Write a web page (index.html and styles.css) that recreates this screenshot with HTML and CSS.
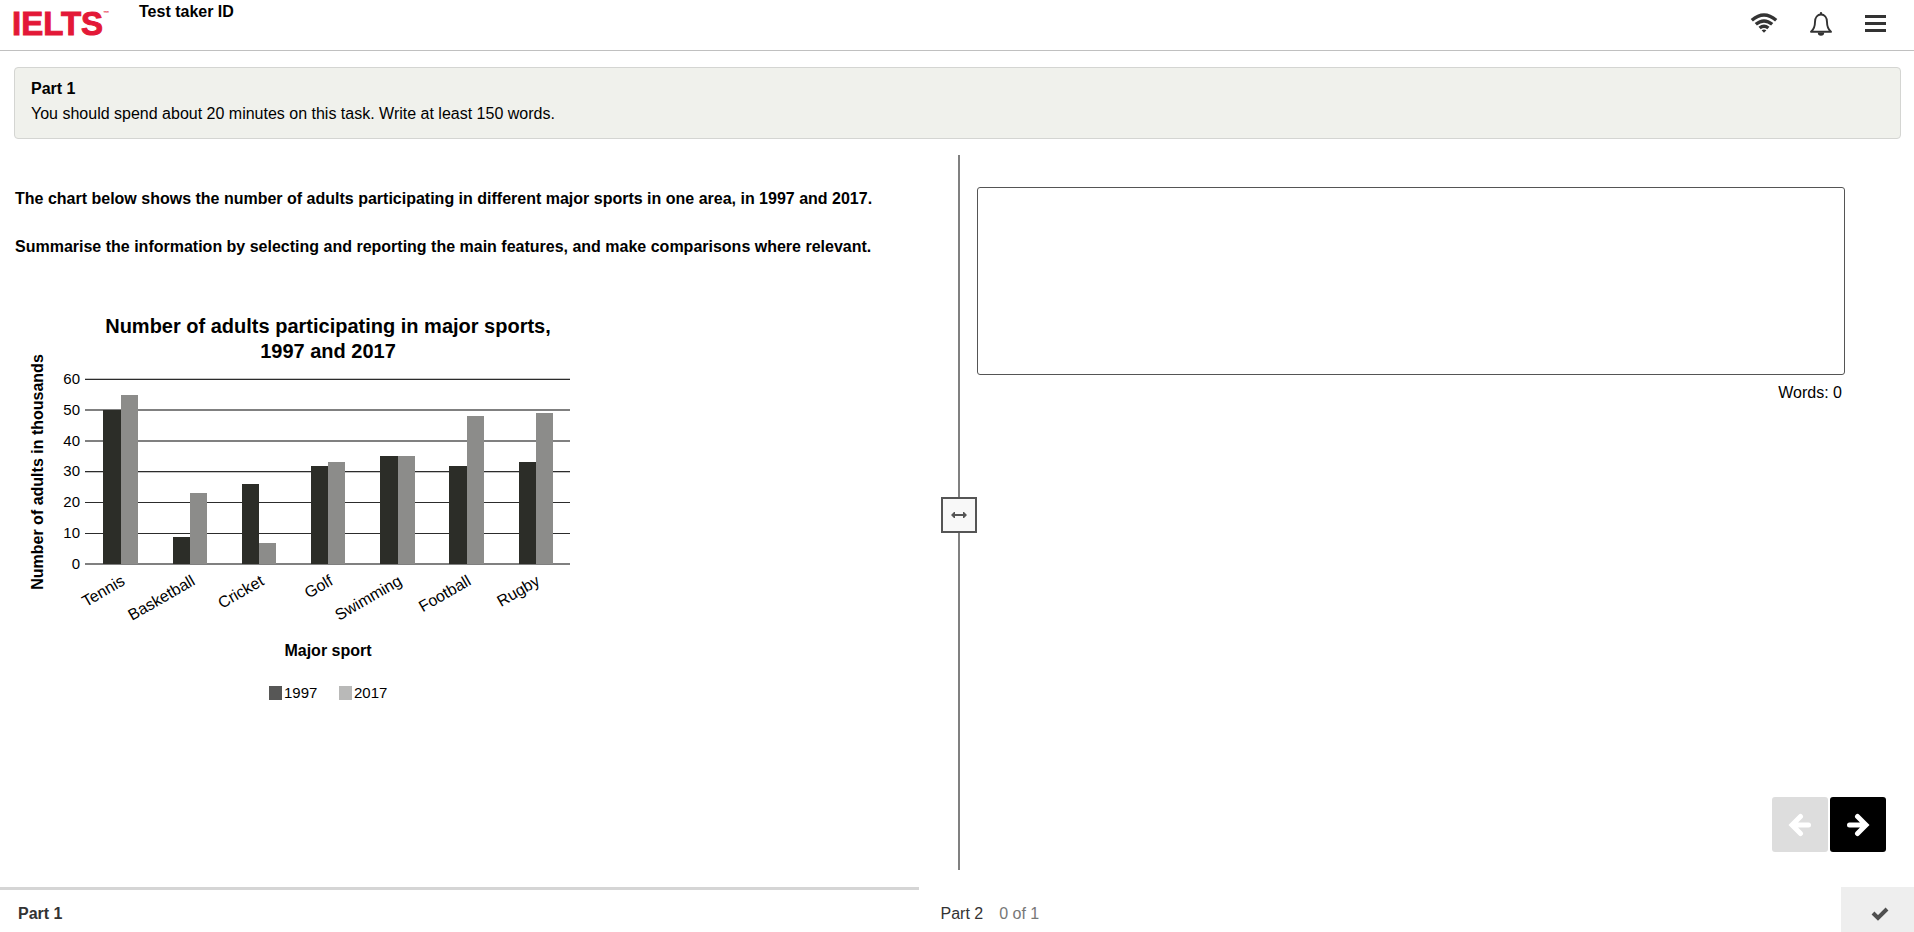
FILE: index.html
```html
<!DOCTYPE html>
<html lang="en">
<head>
<meta charset="utf-8">
<title>IELTS Writing - Part 1</title>
<link rel="stylesheet" href="styles.css">
</head>
<body>
<header class="topbar">
  <div class="logo">IELTS<span class="logo-tm">™</span></div>
  <div class="taker">Test taker ID</div>
  <div class="tools">
    <button class="tool" type="button" aria-label="Connection">
      <svg width="28" height="28" viewBox="0 0 28 28" fill="none" stroke="#333" stroke-width="3.400">
        <path d="M1.800 11.300Q14 0.900 26.200 11.300M5.800 15.300Q14 8.500 22.200 15.300M9.600 19Q14 15.300 18.400 19"/>
        <path d="M11.600 21.300Q14 19.700 16.400 21.300L14 23.800Z" fill="#333" stroke="none"/>
      </svg>
    </button>
    <button class="tool" type="button" aria-label="Notifications">
      <svg width="28" height="28" viewBox="-1 0 28 28">
        <path d="M4 22.800C7.500 19.800 8 16.500 8 13C8 8.500 10.500 5.500 14 5.500S20 8.500 20 13C20 16.500 20.500 19.800 24 22.800Z" fill="none" stroke="#333" stroke-width="1.900" stroke-linejoin="round"/>
        <path d="M12.800 5.500V4.200a1.200 1.200 0 0 1 2.400 0V5.500ZM10.800 23.500h6.400a3.200 3.200 0 0 1-6.400 0Z" fill="#333"/>
      </svg>
    </button>
    <button class="tool" type="button" aria-label="Menu">
      <svg width="28" height="28" viewBox="0 0 28 28" fill="#333">
        <path d="M3 6h21v3H3zM3 13h21v3H3zM3 20h21v3H3z"/>
      </svg>
    </button>
  </div>
</header>

<section class="banner">
  <h1 class="banner-title">Part 1</h1>
  <p class="banner-text">You should spend about 20 minutes on this task. Write at least 150 words.</p>
</section>

<main class="split">
  <section class="task">
    <p class="prompt">The chart below shows the number of adults participating in different major sports in one area, in 1997 and 2017.</p>
    <p class="prompt">Summarise the information by selecting and reporting the main features, and make comparisons where relevant.</p>
    <svg class="chart" width="560" height="410" viewBox="0 0 560 410" role="img" aria-label="Number of adults participating in major sports, 1997 and 2017">
      <g class="chart-title">
        <text x="313" y="33">Number of adults participating in major sports,</text>
        <text x="313" y="58">1997 and 2017</text>
      </g>
      <text class="axis-title" transform="translate(28 172) rotate(-90)">Number of adults in thousands</text>
      <g class="grid-dark">
        <rect x="70" y="79" width="485" height="1"/>
        <rect x="70" y="171" width="485" height="1"/>
        <rect x="70" y="202" width="485" height="1"/>
        <rect x="70" y="233" width="485" height="1"/>
      </g>
      <g class="grid-soft">
        <rect x="70" y="78" width="485" height="1"/>
        <rect x="70" y="172" width="485" height="1"/>
      </g>
      <g class="grid-mid">
        <rect x="70" y="109" width="485" height="2"/>
        <rect x="70" y="140" width="485" height="2"/>
        <rect x="70" y="263" width="485" height="2"/>
      </g>
      <g class="ticks">
        <text x="65" y="84">60</text>
        <text x="65" y="115">50</text>
        <text x="65" y="146">40</text>
        <text x="65" y="176">30</text>
        <text x="65" y="207">20</text>
        <text x="65" y="238">10</text>
        <text x="65" y="269">0</text>
      </g>
      <g class="bars-1997">
        <rect x="88" y="110" width="18" height="154"/>
        <rect x="158" y="237" width="17" height="27"/>
        <rect x="227" y="184" width="17" height="80"/>
        <rect x="296" y="166" width="17" height="98"/>
        <rect x="365" y="156" width="18" height="108"/>
        <rect x="434" y="166" width="18" height="98"/>
        <rect x="504" y="162" width="17" height="102"/>
      </g>
      <g class="bars-2017">
        <rect x="106" y="95" width="17" height="169"/>
        <rect x="175" y="193" width="17" height="71"/>
        <rect x="244" y="243" width="17" height="21"/>
        <rect x="313" y="162" width="17" height="102"/>
        <rect x="383" y="156" width="17" height="108"/>
        <rect x="452" y="116" width="17" height="148"/>
        <rect x="521" y="113" width="17" height="151"/>
      </g>
      <g class="categories">
        <text transform="translate(111 284) rotate(-30)">Tennis</text>
        <text transform="translate(181 284) rotate(-30)">Basketball</text>
        <text transform="translate(250 284) rotate(-30)">Cricket</text>
        <text transform="translate(319 284) rotate(-30)">Golf</text>
        <text transform="translate(388 284) rotate(-30)">Swimming</text>
        <text transform="translate(457 284) rotate(-30)">Football</text>
        <text transform="translate(526 284) rotate(-30)">Rugby</text>
      </g>
      <text class="axis-title" x="313" y="356">Major sport</text>
      <rect x="254" y="386" width="13" height="14" fill="#575756"/>
      <rect x="324" y="386" width="13" height="14" fill="#b9b9b8"/>
      <g class="legend">
        <text x="269" y="398">1997</text>
        <text x="339" y="398">2017</text>
      </g>
    </svg>
  </section>

  <div class="divider">
    <button class="handle" type="button" aria-label="Resize panels">
      <svg width="16" height="10" viewBox="0 0 16 10" fill="#555"><path d="M0 5L3 2H4V4H12V2H13L16 5L13 8H12V6H4V8H3Z"/></svg>
    </button>
  </div>

  <section class="answer">
    <textarea class="answer-box" aria-label="Your answer"></textarea>
    <div class="words">Words: 0</div>
    <div class="pager">
      <button class="page-btn page-prev" type="button" disabled aria-label="Previous">
        <svg width="24" height="24" viewBox="0 0 24 24" fill="none" stroke="#fff" stroke-width="5" stroke-linecap="round" stroke-linejoin="miter"><path d="M20.500 12H5M12.500 3.500L4 12L12.500 20.500"/></svg>
      </button>
      <button class="page-btn" type="button" aria-label="Next">
        <svg width="24" height="24" viewBox="0 0 24 24" fill="none" stroke="#fff" stroke-width="5" stroke-linecap="round" stroke-linejoin="miter"><path d="M3.500 12H19M11.500 3.500L20 12L11.500 20.500"/></svg>
      </button>
    </div>
  </section>
</main>

<footer class="footer">
  <button class="part part-current" type="button">Part 1</button>
  <button class="part" type="button">Part 2<span class="part-count">0 of 1</span></button>
  <button class="submit" type="button" aria-label="Finish test">
    <svg width="18" height="14" viewBox="0 0 18 14" fill="none" stroke="#4f4f4f" stroke-width="4"><path d="M2 6L7 11L16 2"/></svg>
  </button>
</footer>
</body>
</html>
```
FILE: styles.css
```css
* {
  box-sizing: border-box;
}

body {
  margin: 0;
  min-height: 100vh;
  display: flex;
  flex-direction: column;
  background: #fff;
  color: #000;
  font: 16px/24px "Liberation Sans", Arial, sans-serif;
}

button {
  margin: 0;
  padding: 0;
  border: 0;
  background: none;
  color: inherit;
  font: inherit;
}

svg {
  display: block;
}

.topbar {
  display: flex;
  align-items: flex-start;
  height: 51px;
  padding: 0 24px 0 12px;
  border-bottom: 1px solid #c0c0c0;
}

.logo {
  display: flex;
  width: 127px;
  color: #e31837;
  font: bold 33px/48px "Liberation Sans", Arial, sans-serif;
  -webkit-text-stroke: 1px #e31837;
}

.logo-tm {
  font-size: 6px;
  line-height: 26px;
  -webkit-text-stroke: 0;
}

.taker {
  font-weight: bold;
}

.tools {
  display: flex;
  gap: 28px;
  margin-left: auto;
  padding-top: 9px;
}

.banner {
  margin: 16px 13px 0 14px;
  padding: 8px 16px 12px;
  border: 1px solid #d4d5d2;
  border-radius: 4px;
  background: #f0f1ec;
}

.banner-title {
  margin: 0;
  font-size: 16px;
  line-height: 25px;
}

.banner-text {
  margin: 0;
  line-height: 25px;
}

.split {
  flex: 1;
  display: grid;
  grid-template-columns: 1fr 36px 1fr;
  padding: 16px 0 17px 4px;
}

.task {
  padding: 32px 0 0 11px;
}

.prompt {
  margin: 0 0 24px;
  font-weight: bold;
}

.chart {
  margin-top: 41px;
  fill: #000;
  font-size: 15px;
}

.chart-title {
  font-size: 20px;
  font-weight: bold;
  text-anchor: middle;
}

.axis-title {
  font-size: 16px;
  font-weight: bold;
  text-anchor: middle;
}

.grid-dark {
  fill: #2c2c2c;
}

.grid-soft {
  fill: #c4c4c4;
}

.grid-mid {
  fill: #808080;
}

.ticks {
  text-anchor: end;
}

.categories {
  font-size: 16px;
  text-anchor: end;
}

.bars-1997 {
  fill: #2c2d28;
}

.bars-2017 {
  fill: #8c8c8a;
}

.divider {
  display: flex;
  align-items: center;
  padding-top: 5px;
  background: linear-gradient(#808080, #808080) center / 2px 100% no-repeat;
}

.handle {
  display: grid;
  place-items: center;
  width: 36px;
  height: 36px;
  border: 2px solid #555;
  background: #f8f8f8;
}

.answer {
  display: flex;
  flex-direction: column;
  padding: 32px 28px 18px 0;
}

.answer-box {
  height: 188px;
  margin-right: 41px;
  border: 1px solid #555;
  border-radius: 3px;
  resize: none;
  font: inherit;
}

.words {
  margin: 6px 44px 0 0;
  text-align: right;
}

.pager {
  display: flex;
  justify-content: flex-end;
  gap: 2px;
  margin-top: auto;
}

.page-btn {
  display: grid;
  place-items: center;
  width: 56px;
  height: 55px;
  border-radius: 3px;
  background: #000;
}

.page-prev {
  background: #ddd;
}

.footer {
  display: flex;
  height: 45px;
}

.part {
  flex: 1;
  padding: 6px 18px 0;
  border-top: 3px solid transparent;
  color: #333;
  text-align: left;
}

.part-current {
  margin-right: 4px;
  border-top-color: #d5d5d5;
  font-weight: bold;
}

.part-count {
  margin-left: 16px;
  color: #777;
}

.submit {
  display: grid;
  place-items: center;
  width: 73px;
  padding: 8px 0 0 4px;
  background: #eee;
}
```
